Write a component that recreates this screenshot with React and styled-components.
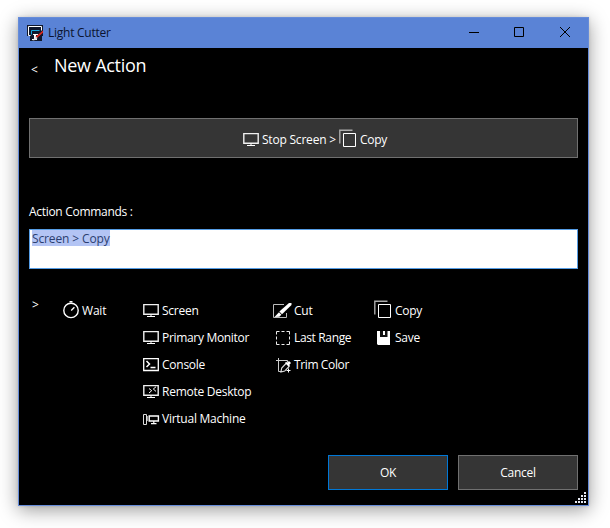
import React from "react";
import styled, { createGlobalStyle } from "styled-components";

const GlobalStyle = createGlobalStyle`
  * { box-sizing: border-box; }
  body {
    margin: 0;
    background: #fff;
    font-family: "Open Sans", "Noto Sans", sans-serif;
    font-size: 12px;
    line-height: 16px;
  }
  button { font: inherit; }
  svg { display: block; overflow: visible; }
`;

const Desktop = styled.div`
  width: 610px;
  height: 528px;
  padding: 17px 21px 22px 18px;
  overflow: hidden;
  background: #fff;
`;

const Window = styled.main`
  width: 571px;
  height: 489px;
  display: flex;
  flex-direction: column;
  border: 1px solid #668cd9;
  background: #000;
  color: #fff;
  box-shadow: 0 4px 18px rgba(0, 0, 0, 0.4), 0 0 3px rgba(0, 0, 0, 0.12);
`;

const TitleBar = styled.header`
  height: 30px;
  flex: none;
  display: flex;
  align-items: center;
  padding-left: 8px;
  background: #5a83d6;
  color: #0b1430;
`;

const Label = styled.span`
  white-space: nowrap;
  letter-spacing: ${(p) => p.$track ?? -0.25}px;
`;

const WindowTitle = styled(Label)`
  flex: 1;
  margin-left: 5px;
`;

const CaptionButton = styled.button`
  width: ${(p) => (p.$last ? 46 : 45)}px;
  height: 30px;
  padding: 0 0 0 ${(p) => (p.$last ? 18 : 17)}px;
  border: 0;
  display: flex;
  align-items: center;
  background: transparent;
  color: #000;
`;

const Content = styled.div`
  flex: 1;
  display: flex;
  flex-direction: column;
  padding: 0 10px;
`;

const Heading = styled.div`
  height: 70px;
  display: flex;
  align-items: flex-start;
`;

const BackButton = styled.button`
  width: 25px;
  height: 16px;
  margin-top: 14px;
  padding: 0 0 0 2px;
  border: 0;
  background: none;
  color: #fff;
  text-align: left;
`;

const PageTitle = styled.h1`
  margin: 5px 0 0;
  font-size: 18px;
  line-height: 24px;
  font-weight: 400;
  letter-spacing: -0.28px;
`;

const ActionButton = styled.button`
  height: 40px;
  padding: 3px 0 0 23px;
  display: flex;
  align-items: center;
  justify-content: center;
  gap: 3px;
  border: 1px solid #707070;
  background: #353535;
  color: #fff;
`;

const FieldLabel = styled.label`
  margin-top: 46px;
  height: 25px;
  display: block;
`;

const Field = styled.div`
  height: 40px;
  padding: 0 2px;
  border: 1px solid #569de5;
  background: #fff;
`;

const Selection = styled.span`
  display: block;
  width: 78px;
  height: 16px;
  background: #b3c4f4;
  color: #2b3e70;
  line-height: 17px;
  white-space: nowrap;
  letter-spacing: ${(p) => p.$track}px;
`;

const Palette = styled.section`
  height: 127px;
  margin-top: 28px;
  display: grid;
  grid-template-columns: 34px 80px 130px 101px 1fr;
`;

const Column = styled.div`
  display: flex;
  flex-direction: column;
`;

const Command = styled.div`
  height: 27px;
  flex: none;
  display: flex;
  align-items: center;
`;

const IconSlot = styled.span`
  width: ${(p) => p.$width}px;
  height: 21px;
  flex: none;
`;

const Expand = styled.span`
  padding: 0 3px;
  line-height: 16px;
`;

const Footer = styled.footer`
  margin-top: 31px;
  display: flex;
  justify-content: flex-end;
  gap: 10px;
`;

const DialogButton = styled.button`
  width: 120px;
  height: 35px;
  padding: 0;
  border: 1px solid ${(p) => (p.$primary ? "#0078d7" : "#707070")};
  background: #353535;
  color: #fff;
`;

const GripRow = styled.div`
  display: flex;
  justify-content: flex-end;
  margin: 2px -8px 0 0;
`;

function AppIcon() {
  return (
    <svg width="16" height="16" viewBox="0 0 16 16" fill="none">
      <path d="M0 0h16v11h-1v5H3v-5H0z" fill="#10182c" />
      <path d="M3.5 10.5h-2v-9h13v4" stroke="#fff" />
      <path d="M4.5 9.5v-4h8" stroke="#18a5dc" />
      <path d="M6 9h5v1H9v4h1v1H5v-1h2v-4H6z" fill="#fff" />
      <path d="M16 5.5v2.2L10 13l-2 1.5.8-3z" fill="#d92920" />
      <path d="m8.5 11.5-3 4 3-.5 2-2z" fill="#e5e5eb" />
    </svg>
  );
}

function MonitorArt() {
  return <>
    <path d="M.8 4.6h14.4v9.6H.8z" stroke="#f0f0f0" strokeWidth="1.4" />
    <path d="M8 14.5v2M4 16.5h8" stroke="#fff" />
  </>;
}

const art = {
  monitor: <MonitorArt />,
  remote: <>
    <MonitorArt />
    <path d="m6 7.5 2.7 2.2L6 12M13 5.8 10.3 8l2.7 2.4" stroke="#fff" />
  </>,
  console: <>
    <path d="M.7 4.7h14.6v11.8H.7z" stroke="#fff" strokeWidth="1.3" />
    <path d="m3.5 7 3 3-3 3M7.5 13.5h5" stroke="#fff" strokeWidth="1.5" />
  </>,
  vm: <>
    <path d="M.5 6.5h3v10h-3z" stroke="#ddd" />
    <path d="M6.2 8h9.2v5H6.2z" stroke="#fff" strokeWidth="1.4" />
    <path d="M10.8 13v3M8 15.6h5.5" stroke="#fff" strokeWidth="1.2" />
    <path d="M4.5 8v5" stroke="#999" />
  </>,
  wait: <>
    <circle cx="8" cy="10.4" r="7.2" stroke="#fff" strokeWidth="1.4" />
    <path d="M6.5 1.7h3M8.2 10.4l3.2-3.2" stroke="#fff" strokeWidth="1.4" />
  </>,
  cut: <>
    <path d="M11 4.5H.5v13h13V13" stroke="#bbb" />
    <path d="M16 3h2.5v2L9 14.2 6.4 11.6z" fill="#fff" />
    <path d="m6 12.2 2.4 2.5-2 2L1.5 17z" fill="#fff" />
  </>,
  range: <path d="M3.5 7.5v-3h3m2 0h3m2 0h3v3m0 2v3m0 2v3h-3m-2 0h-3m-2 0h-3v-3m0-2v-3" stroke="#eee" />,
  color: <>
    <path d="M3 6.5h11.5v2M5.5 4v13.5h3" stroke="#ccc" />
    <path d="m13 9.5-4.3 4.6-.8 4 3.8-1 4.3-4.6" stroke="#ddd" strokeWidth="1.1" />
    <path d="m12 9 1.2-1.2 1 1L16 7l2 2-1.8 2 1 1L16 13z" fill="#fff" />
    <path d="M13.5 16.5h4M15.5 14.5v4" stroke="#fff" />
  </>,
  copy: <>
    <path d="M.8 14.5V1.2H13.5" stroke="#aaa" strokeWidth="1.4" />
    <path d="M4.5 4.5h12v13h-12z" stroke="#fff" />
  </>,
  save: <>
    <path d="M3 4h13v14H4l-1-1z" fill="#fff" />
    <path d="M6 4h7.5v6H6z" fill="#111" />
    <path d="M9 4h2v4H9z" fill="#fff" />
  </>,
};

function Icon({ name, slot, size = 20 }) {
  return (
    <IconSlot $width={slot}>
      <svg width={size} height="20" viewBox={`0 0 ${size} 20`} fill="none">{art[name]}</svg>
    </IconSlot>
  );
}

const columns = [
  { slot: 19, items: [["wait", "Wait", -0.2]] },
  { slot: 19, items: [
    ["monitor", "Screen"], ["monitor", "Primary Monitor", -0.32], ["console", "Console"],
    ["remote", "Remote Desktop"], ["vm", "Virtual Machine"],
  ] },
  { slot: 21, items: [["cut", "Cut"], ["range", "Last Range", -0.35], ["color", "Trim Color", -0.38]] },
  { slot: 21, items: [["copy", "Copy"], ["save", "Save"]] },
];

const gripDots = [[9, 0], [6, 3], [9, 3], [3, 6], [6, 6], [9, 6], [0, 9], [3, 9], [6, 9], [9, 9]];

export default function App() {
  return (
    <>
      <GlobalStyle />
      <Desktop>
        <Window>
          <TitleBar>
            <AppIcon />
            <WindowTitle $track={-0.25}>Light Cutter</WindowTitle>
            <CaptionButton aria-label="Minimize">
              <svg width="10" height="10"><path d="M0 4.5h10" stroke="currentColor" /></svg>
            </CaptionButton>
            <CaptionButton aria-label="Maximize">
              <svg width="10" height="10"><path d="M.5-.5h9v9h-9z" fill="none" stroke="currentColor" /></svg>
            </CaptionButton>
            <CaptionButton aria-label="Close" $last>
              <svg width="10" height="10"><path d="m0-1 10 10M10-1 0 9" stroke="currentColor" /></svg>
            </CaptionButton>
          </TitleBar>
          <Content>
            <Heading>
              <BackButton>&lt;</BackButton>
              <PageTitle>New Action</PageTitle>
            </Heading>
            <ActionButton>
              <Icon name="monitor" slot={16} />
              <Label $track={-0.2}>Stop Screen &gt;</Label>
              <Icon name="copy" slot={18} />
              <Label>Copy</Label>
            </ActionButton>
            <FieldLabel><Label $track={-0.3}>Action Commands :</Label></FieldLabel>
            <Field><Selection $track={-0.12}>Screen &gt; Copy</Selection></Field>
            <Palette>
              <Expand>&gt;</Expand>
              {columns.map((column, i) => (
                <Column key={i}>
                  {column.items.map(([icon, text, track]) => (
                    <Command key={text}>
                      <Icon name={icon} slot={column.slot} />
                      <Label $track={track}>{text}</Label>
                    </Command>
                  ))}
                </Column>
              ))}
            </Palette>
            <Footer>
              <DialogButton $primary><Label>OK</Label></DialogButton>
              <DialogButton><Label>Cancel</Label></DialogButton>
            </Footer>
            <GripRow>
              <svg width="11" height="11">
                {gripDots.map(([x, y]) => <rect key={`${x}-${y}`} x={x} y={y} width="2" height="2" fill="#e6e9f2" />)}
              </svg>
            </GripRow>
          </Content>
        </Window>
      </Desktop>
    </>
  );
}
